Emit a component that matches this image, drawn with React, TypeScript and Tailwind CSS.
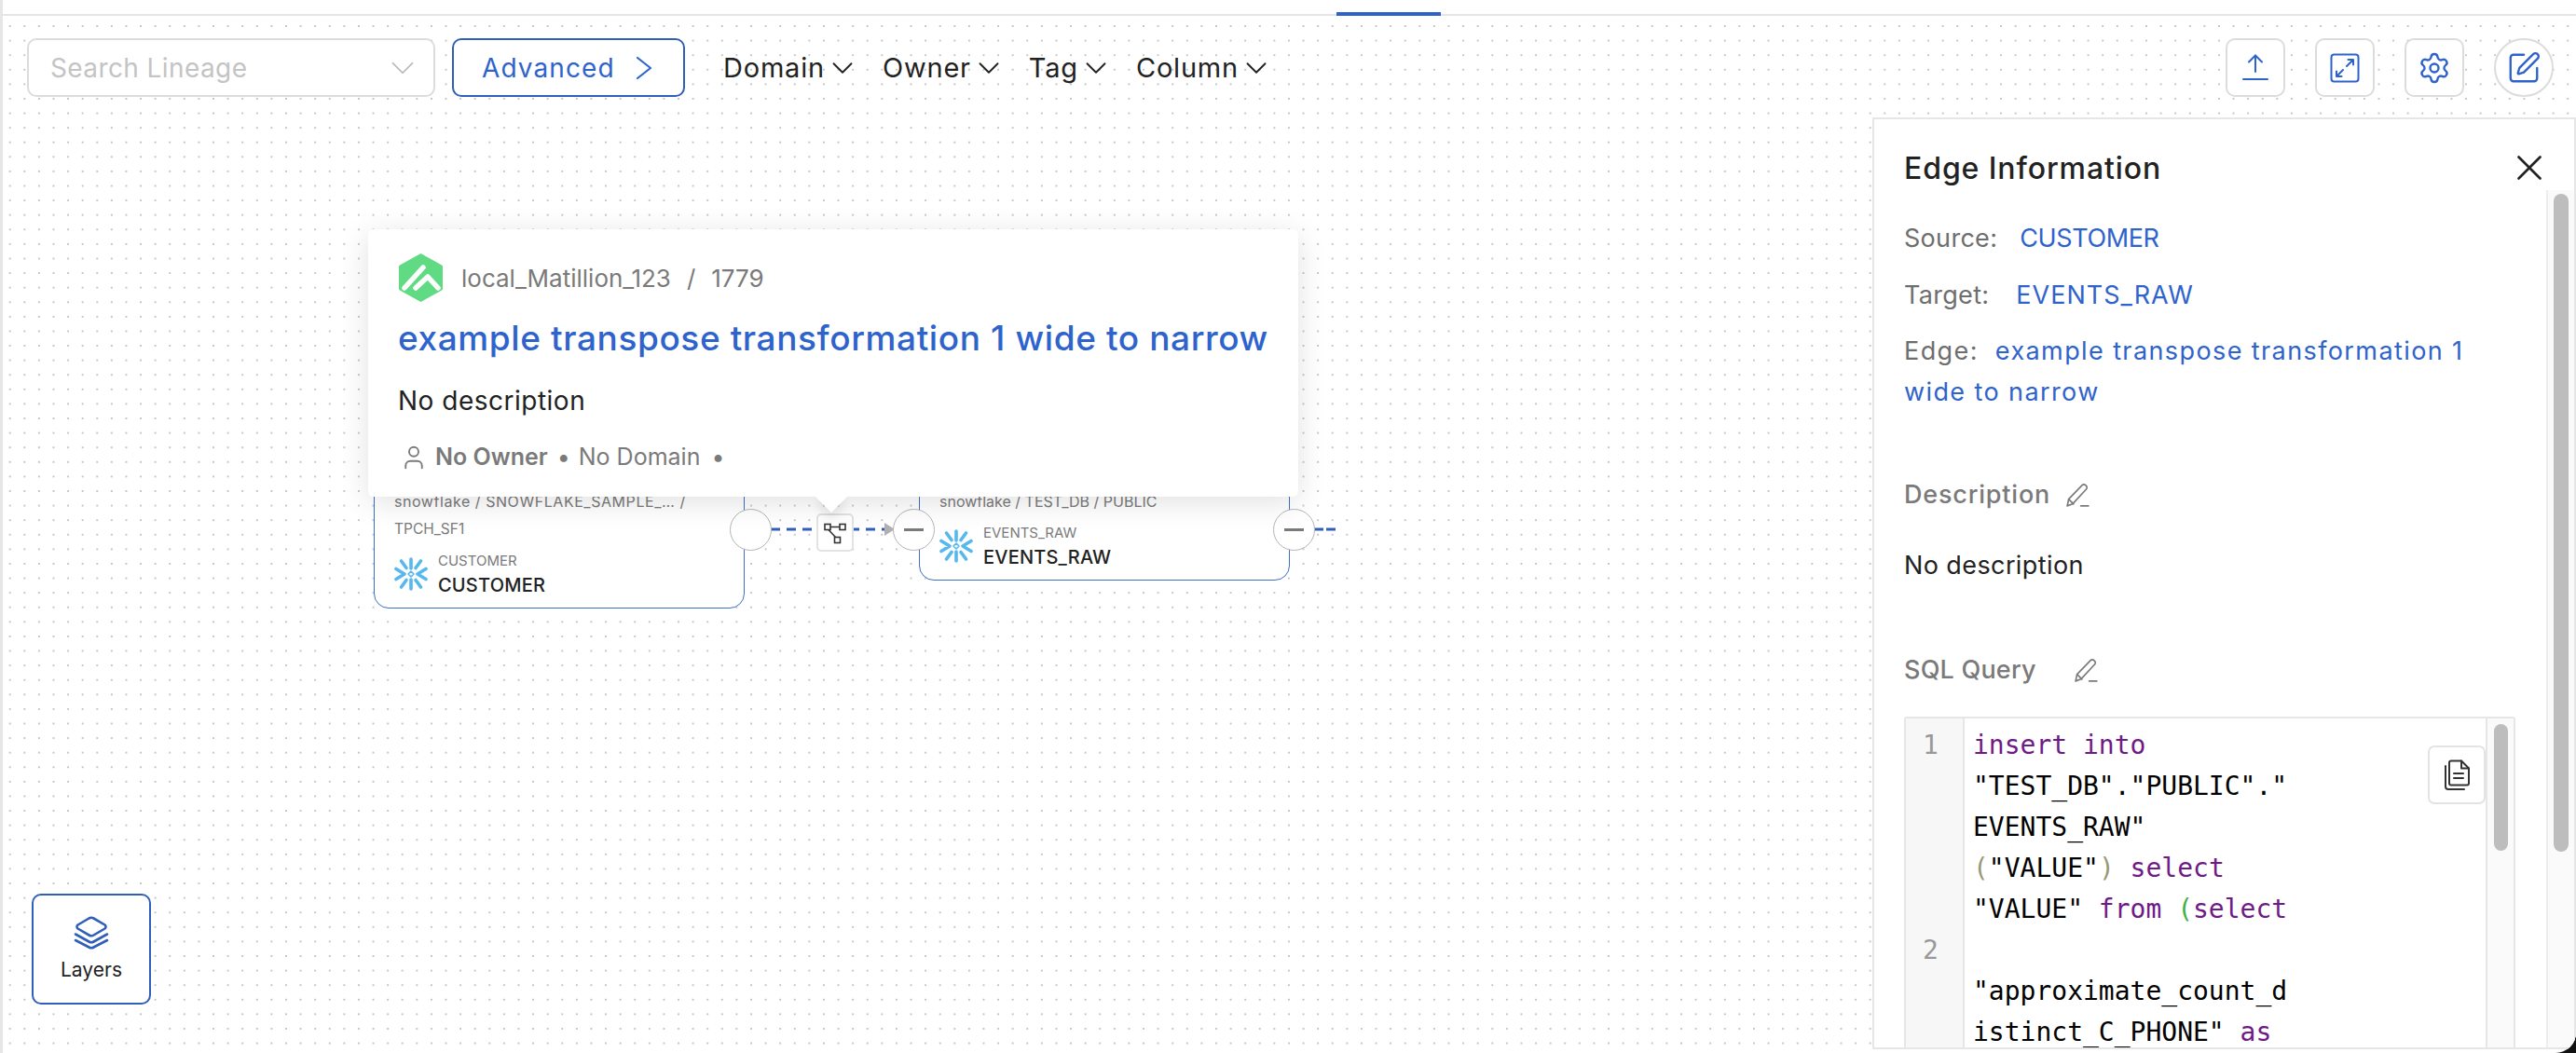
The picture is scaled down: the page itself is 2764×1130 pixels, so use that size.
import React from 'react';
import { ChevronDown, Settings, SquarePen, X, User } from 'lucide-react';

const SnowflakeIcon = () => (
  <svg width="36" height="36" viewBox="0 0 36 36" fill="none" stroke="#56b9ec" strokeLinecap="round" strokeLinejoin="round">
    <g strokeWidth="3.6">
      <path d="M18 2V12M18 24V34" />
      <path d="M7.5 4L13 11.5M28.5 4L23 11.5M7.5 32L13 24.5M28.5 32L23 24.5" />
      <path d="M2 12.5L11 18L2 23.5M34 12.5L25 18L34 23.5" />
    </g>
    <path d="M18 15l3 3-3 3-3-3z" strokeWidth="1.6" />
  </svg>
);

const MatillionIcon = () => (
  <svg width="49" height="54" viewBox="0 0 49 54">
    <path d="M24.5 1L47 13.5a2 2 0 0 1 1 1.8v23.4a2 2 0 0 1-1 1.8L24.5 53 2 40.5a2 2 0 0 1-1-1.8V15.3a2 2 0 0 1 1-1.8z" fill="#61da84" />
    <path d="M7 38L27 16M19 38L32 26L43 38" fill="none" stroke="#fff" strokeWidth="5.5" strokeLinecap="round" strokeLinejoin="round" />
  </svg>
);

const PencilLine = () => (
  <svg width="29" height="29" viewBox="0 0 28 28" fill="none" stroke="#7a7a7a" strokeWidth="1.6" strokeLinejoin="round" strokeLinecap="round">
    <path d="M3 25l1.5-7L18.5 3.5a2.4 2.4 0 0 1 3.4 0l.8.8a2.4 2.4 0 0 1 0 3.4L8.5 23z" />
    <path d="M4.5 18l5 5" />
    <path d="M17 25h8" />
  </svg>
);

const Handle = ({ x, minus }: { x: string; minus?: boolean }) => (
  <div className={`absolute top-[529px] w-[45px] h-[45px] rounded-full bg-white border-[1.5px] border-[#b5b5b5] flex items-center justify-center ${x}`}>
    {minus && <div className="w-[21px] h-[3px] bg-[#7a7a7a]" />}
  </div>
);

const ToolButton = ({ round, children }: { round?: boolean; children: React.ReactNode }) => (
  <button className={`w-16 h-[63px] bg-white border-2 border-[#dcdcdc] flex items-center justify-center ${round ? 'rounded-full' : 'rounded-[10px]'}`}>
    {children}
  </button>
);

const Filter = ({ label, className }: { label: string; className: string }) => (
  <div className={`flex items-center text-[29px] tracking-[0.8px] text-[#222] ${className}`}>
    <span>{label}</span>
    <ChevronDown size={38} strokeWidth={1.2} />
  </div>
);

const kw = 'text-[#6f1a86]';

const codeRows: { n?: number; c: React.ReactNode }[] = [
  { n: 1, c: <><span className={kw}>insert</span> <span className={kw}>into</span></> },
  { c: '"TEST_DB"."PUBLIC"."' },
  { c: 'EVENTS_RAW"' },
  { c: <><span className="text-[#999977]">(</span>"VALUE"<span className="text-[#999977]">)</span> <span className={kw}>select</span></> },
  { c: <>"VALUE" <span className={kw}>from</span> <span className="text-[#44b044]">(</span><span className={kw}>select</span></> },
  { n: 2, c: '' },
  { c: '"approximate_count_d' },
  { c: <>istinct_C_PHONE" <span className={kw}>as</span></> },
];

const EdgePanel = () => (
  <aside className="absolute right-0 top-[109px] bottom-[4px] w-[755px] bg-white border-2 border-[#e6e6e6] flex flex-col z-20">
    <div className="relative h-[76px] shrink-0 pt-[36px] pl-[32px]">
      <h2 className="text-[32px] leading-[34px] tracking-[0.9px] font-medium text-[#222]">Edge Information</h2>
      <X size={46} strokeWidth={1.4} className="absolute top-[29px] right-[25px] text-[#222]" />
    </div>
    <div className="flex flex-1 min-h-0">
      <div className="flex-1 min-w-0 pt-[30px] pl-[32px] pr-[33px] overflow-hidden">
        <div className="text-[27px] leading-[44px] tracking-[0.3px]">
          <span className="text-[#6e6e6e]">Source:</span>
          <span className="text-[#2f63cc] ml-6 tracking-[-0.4px]">CUSTOMER</span>
        </div>
        <div className="mt-[17px] text-[27px] leading-[44px] tracking-[0.3px]">
          <span className="text-[#6e6e6e]">Target:</span>
          <span className="text-[#2f63cc] ml-[29px] tracking-[1px]">EVENTS_RAW</span>
        </div>
        <div className="mt-4 text-[27px] leading-[44px] tracking-[1.4px]">
          <span className="text-[#6e6e6e]">Edge:</span>
          <span className="text-[#2f63cc] ml-[18px]">example transpose transformation 1 wide to narrow</span>
        </div>

        <div className="mt-[68px] h-10 flex items-center gap-[15px] text-[27px] tracking-[0.8px] font-medium text-[#7a7a7a]">
          Description <PencilLine />
        </div>
        <div className="mt-9 leading-10 text-[27px] tracking-[0.4px] text-[#222]">No description</div>
        <div className="mt-[72px] h-10 flex items-center gap-[39px] text-[27px] tracking-[0.2px] font-medium text-[#7a7a7a]">
          SQL Query <PencilLine />
        </div>

        {/* code editor */}
        <div className="relative mt-[30px] h-[420px] border-2 border-[#e6e6e6] rounded-[3px] flex overflow-hidden font-['DejaVu_Sans_Mono',monospace] text-[28px] leading-[44px] text-black">
          <div className="flex-1 min-w-0 pt-[7px] relative">
            <div className="absolute left-0 top-0 bottom-0 w-[63px] bg-[#f7f7f7] border-r-2 border-[#e6e6e6]" />
            {codeRows.map((r, i) => (
              <div key={i} className="relative flex h-11 whitespace-pre">
                <div className="w-[63px] shrink-0 pl-[18px] text-[#999]">{r.n}</div>
                <div className="pl-[9px]">{r.c}</div>
              </div>
            ))}
          </div>
          <div className="w-[30px] shrink-0 bg-[#fafafa] border-l-2 border-[#e6e6e6] pt-[6px] pl-[7px]">
            <div className="w-[15px] h-[136px] rounded-full bg-[#bdbdbd]" />
          </div>
          <button className="absolute top-[29px] right-[30px] w-[62px] h-[63px] bg-white border-2 border-[#e3e3e3] rounded-[7px] flex items-center justify-center">
            <svg width="30" height="34" viewBox="0 0 30 34" fill="none" stroke="#333" strokeWidth="2" strokeLinejoin="round" strokeLinecap="round">
              <path d="M7 3.5a2 2 0 0 1 2-2h11l8 8v16a2 2 0 0 1-2 2H9a2 2 0 0 1-2-2z" />
              <path d="M20 1.5v8h8" />
              <path d="M3 7v22a3 3 0 0 0 3 3h17" />
              <path d="M12 15h10M12 20h10" />
            </svg>
          </button>
        </div>
      </div>
      <div className="w-[30px] shrink-0 bg-[#fafafa] border-l-2 border-[#eeeeee] pt-[4px] pl-[6px]">
        <div className="w-[16px] h-[706px] rounded-full bg-[#bdbdbd]" />
      </div>
    </div>
  </aside>
);

export default function App() {
  return (
    <div className="h-[1130px] bg-[#111]">
      <div className="relative w-full h-[1130px] overflow-hidden bg-white rounded-br-[22px] border-l-[3px] border-[#e6e6e6] flex flex-col font-['Inter',sans-serif]">
        {/* tabs strip */}
        <div className="relative h-[17px] shrink-0 border-b-2 border-[#e6e6e6]">
          <div className="absolute left-[1431px] -bottom-[2px] w-[112px] h-[4px] bg-[#2f63cc]" />
        </div>

        {/* lineage canvas */}
        <div className="relative flex-1 min-h-0 bg-[radial-gradient(circle,#c6c6c6_1px,transparent_1.2px)] bg-[size:15.6px_15.6px] bg-[position:-0.1px_3.2px]">
          {/* toolbar */}
          <div className="flex items-start justify-between pt-6 pl-[26px] pr-6">
            <div className="flex items-center">
              <div className="w-[438px] h-[63px] bg-white border-2 border-[#dcdcdc] rounded-[10px] flex items-center justify-between pl-[23px] pr-[12px] text-[28px] tracking-[0.4px] text-[#c4c4c4]">
                Search Lineage
                <ChevronDown size={42} strokeWidth={1} className="text-[#b5b5b5]" />
              </div>
              <div className="ml-[18px] w-[250px] h-[63px] bg-white border-2 border-[#2f5fb8] rounded-[10px] flex items-center pl-[30px] gap-[22px] text-[28px] tracking-[1.1px] text-[#2f63cc]">
                Advanced
                <svg width="18" height="26" viewBox="0 0 18 26" fill="none" stroke="#2f63cc" strokeWidth="2.2" strokeLinecap="round" strokeLinejoin="round">
                  <path d="M2 2l14 11L2 24" />
                </svg>
              </div>
              <Filter label="Domain" className="ml-[41px]" />
              <Filter label="Owner" className="ml-6" />
              <Filter label="Tag" className="ml-6" />
              <Filter label="Column" className="ml-6" />
            </div>
            <div className="flex items-center gap-8">
              <ToolButton>
                <svg width="28" height="30" viewBox="0 0 28 30" fill="none" stroke="#2f63cc" strokeWidth="2" strokeLinecap="round">
                  <path d="M14 1.5V19M7 8.5l7-7 7 7M1 27h26" />
                </svg>
              </ToolButton>
              <ToolButton>
                <svg width="32" height="32" viewBox="0 0 32 32" fill="none" stroke="#2f63cc" strokeWidth="2" strokeLinecap="round" strokeLinejoin="round">
                  <rect x="1.5" y="1.5" width="29" height="29" rx="3" />
                  <path d="M18 14l7-7M19.5 7H25v5.5M14 18l-7 7M12.5 25H7v-5.5" />
                </svg>
              </ToolButton>
              <ToolButton>
                <Settings size={36} strokeWidth={1.6} className="text-[#2f63cc]" />
              </ToolButton>
              <ToolButton round>
                <SquarePen size={38} strokeWidth={1.5} className="text-[#2f63cc]" />
              </ToolButton>
            </div>
          </div>

          {/* edges */}
          <svg className="absolute left-0 top-0 pointer-events-none" width="1500" height="600" fill="none">
            <path d="M824 551H947" stroke="#2f5fb8" strokeWidth="3" strokeDasharray="10 7" />
            <path d="M1407 551H1430" stroke="#2f5fb8" strokeWidth="3" strokeDasharray="10 3" />
            <path d="M946 544l11 7-11 7z" fill="#b0b0b0" />
          </svg>

          {/* source node */}
          <div className="absolute left-[398px] top-[440px] w-[398px] h-[196px] bg-white border-[1.5px] border-[#3f6fc8] rounded-b-[16px] flex flex-col justify-end pl-[21px] pb-[10px]">
            <div className="text-[16px] leading-[30px] tracking-[0.55px] text-[#7a7a7a]">snowflake / SNOWFLAKE_SAMPLE_… /</div>
            <div className="text-[15.5px] leading-[30px] text-[#7a7a7a]">TPCH_SF1</div>
            <div className="flex items-center gap-[11px] mt-[7px]">
              <SnowflakeIcon />
              <div>
                <div className="text-[15px] leading-[24px] text-[#7a7a7a]">CUSTOMER</div>
                <div className="text-[20px] leading-[28px] tracking-[0.2px] font-medium text-[#222]">CUSTOMER</div>
              </div>
            </div>
          </div>

          {/* target node */}
          <div className="absolute left-[983px] top-[440px] w-[398px] h-[166px] bg-white border-[1.5px] border-[#3f6fc8] rounded-b-[16px] flex flex-col justify-end pl-[21px] pb-[10px]">
            <div className="text-[16px] leading-[30px] text-[#7a7a7a]">snowflake / TEST_DB / PUBLIC</div>
            <div className="flex items-center gap-[11px] mt-[7px]">
              <SnowflakeIcon />
              <div>
                <div className="text-[15px] leading-[24px] text-[#7a7a7a]">EVENTS_RAW</div>
                <div className="text-[20px] leading-[28px] tracking-[0.2px] font-medium text-[#222]">EVENTS_RAW</div>
              </div>
            </div>
          </div>

          <Handle x="left-[780px]" />
          <Handle x="left-[955px]" minus />
          <Handle x="left-[1363px]" minus />

          {/* edge button */}
          <button className="absolute left-[873px] top-[534px] w-[40px] h-[41px] bg-white border-2 border-[#e3e3e3] rounded-[5px] flex items-center justify-center">
            <svg width="24" height="24" viewBox="0 0 24 24" fill="none" stroke="#333" strokeWidth="1.6">
              <rect x="1" y="2.5" width="6" height="6" />
              <rect x="17" y="2.5" width="6" height="6" />
              <rect x="11.5" y="16.5" width="6" height="6" />
              <path d="M7 5.5h10M5 8.5l7.5 8" />
            </svg>
          </button>

          {/* edge popup */}
          <div className="absolute left-[392px] top-[229px] w-[998px] h-[287px] z-10 bg-white rounded-[6px] shadow-[0_6px_32px_rgba(0,0,0,0.12)] pl-[32px] pt-[25px]">
            <div className="absolute left-[485px] -bottom-[12px] w-[24px] h-[24px] rotate-45 bg-white shadow-[6px_6px_10px_rgba(0,0,0,0.08)] -z-10" />
            <div className="flex items-center h-[54px] text-[#7a7a7a] text-[26px]">
              <MatillionIcon />
              <span className="ml-[19px]">local_Matillion_123</span>
              <span className="ml-[17px]">/</span>
              <span className="ml-[17px]">1779</span>
            </div>
            <div className="mt-[13px] text-[37px] leading-[50px] tracking-[0.6px] font-medium text-[#2f63cc] whitespace-nowrap">
              example transpose transformation 1 wide to narrow
            </div>
            <div className="mt-[22px] text-[28px] leading-[40px] tracking-[0.5px] text-[#222]">No description</div>
            <div className="mt-[24px] flex items-center h-[34px] text-[25px] text-[#7a7a7a]">
              <User size={30} strokeWidth={1.5} className="ml-[2px]" />
              <span className="ml-[8px] font-semibold">No Owner</span>
              <span className="ml-[10px]">•</span>
              <span className="ml-[9px]">No Domain</span>
              <span className="ml-[12px]">•</span>
            </div>
          </div>

          {/* layers */}
          <button className="absolute left-[31px] top-[942px] w-[128px] h-[119px] bg-white border-2 border-[#2f5fb8] rounded-[10px] flex flex-col items-center pt-[22px]">
            <svg width="38" height="36" viewBox="0 0 38 36" fill="none" stroke="#2f5fb8" strokeWidth="2.6" strokeLinejoin="round" strokeLinecap="round">
              <path d="M16.5 2.5a5 5 0 0 1 5 0l12 7a2.5 2.5 0 0 1 0 4l-12 7a5 5 0 0 1-5 0l-12-7a2.5 2.5 0 0 1 0-4z" />
              <path d="M2 19.5l14.5 8a5 5 0 0 0 5 0l14.5-8" />
              <path d="M2 26l14.5 7.5a5 5 0 0 0 5 0L36 26" />
            </svg>
            <span className="mt-[6px] text-[21px] text-[#222]">Layers</span>
          </button>

          <EdgePanel />
        </div>
      </div>
    </div>
  );
}
